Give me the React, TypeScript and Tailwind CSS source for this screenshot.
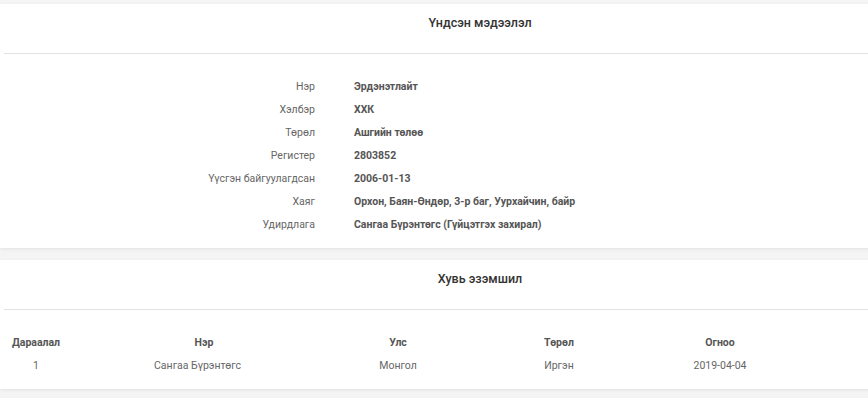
const INFO = [
  { label: 'Нэр', value: 'Эрдэнэтлайт' },
  { label: 'Хэлбэр', value: 'ХХК' },
  { label: 'Төрөл', value: 'Ашгийн төлөө' },
  { label: 'Регистер', value: '2803852' },
  { label: 'Үүсгэн байгуулагдсан', value: '2006-01-13' },
  { label: 'Хаяг', value: 'Орхон, Баян-Өндөр, 3-р баг, Уурхайчин, байр' },
  { label: 'Удирдлага', value: 'Сангаа Бүрэнтөгс (Гүйцэтгэх захирал)' },
]

const COLS = ['Дараалал', 'Нэр', 'Улс', 'Төрөл', 'Огноо']
const ROWS = [['1', 'Сангаа Бүрэнтөгс', 'Монгол', 'Иргэн', '2019-04-04']]

function CardHeader({ title }: { title: string }) {
  return (
    <div className="h-[50px] pt-[11px] text-center border-b border-[#e3e3e3] ml-1">
      <h2 className="text-[12.5px] leading-[16px] font-medium text-[#333]">{title}</h2>
    </div>
  )
}

export default function App() {
  return (
    <div className="w-full h-[398px] overflow-hidden bg-[#f4f4f4] pt-1" style={{ fontFamily: 'Roboto, "Noto Sans", sans-serif' }}>
      <div className="w-[956px] flex flex-col gap-3">
        {/* Үндсэн мэдээлэл */}
        <section className="bg-white shadow-[0_1px_3px_rgba(0,0,0,0.08)]">
          <CardHeader title="Үндсэн мэдээлэл" />
          <div className="pt-[21px] pb-[12px] grid grid-cols-[315px_1fr] gap-x-[39px] text-[10.5px] leading-[23px]">
            {INFO.map((row) => (
              <div key={row.label} className="contents">
                <span className="text-right text-[#666]">{row.label}</span>
                <span className="font-bold text-[#555]">{row.value}</span>
              </div>
            ))}
          </div>
        </section>

        {/* Хувь эзэмшил */}
        <section className="bg-white shadow-[0_1px_3px_rgba(0,0,0,0.08)]">
          <CardHeader title="Хувь эзэмшил" />
          <div className="pt-[21px] pb-[12px] text-[10.5px] leading-[23px]">
            <div className="grid grid-cols-[72px_264px_124px_198px_124px] font-bold text-[#555] text-center">
              {COLS.map((c) => (
                <span key={c}>{c}</span>
              ))}
            </div>
            {ROWS.map((r) => (
              <div key={r[0]} className="grid grid-cols-[72px_264px_124px_198px_124px] text-[#666] text-center">
                {r.map((cell, i) => (
                  <span key={i} className={i === 1 ? 'pr-[13px]' : ''}>{cell}</span>
                ))}
              </div>
            ))}
          </div>
        </section>
      </div>
    </div>
  )
}
